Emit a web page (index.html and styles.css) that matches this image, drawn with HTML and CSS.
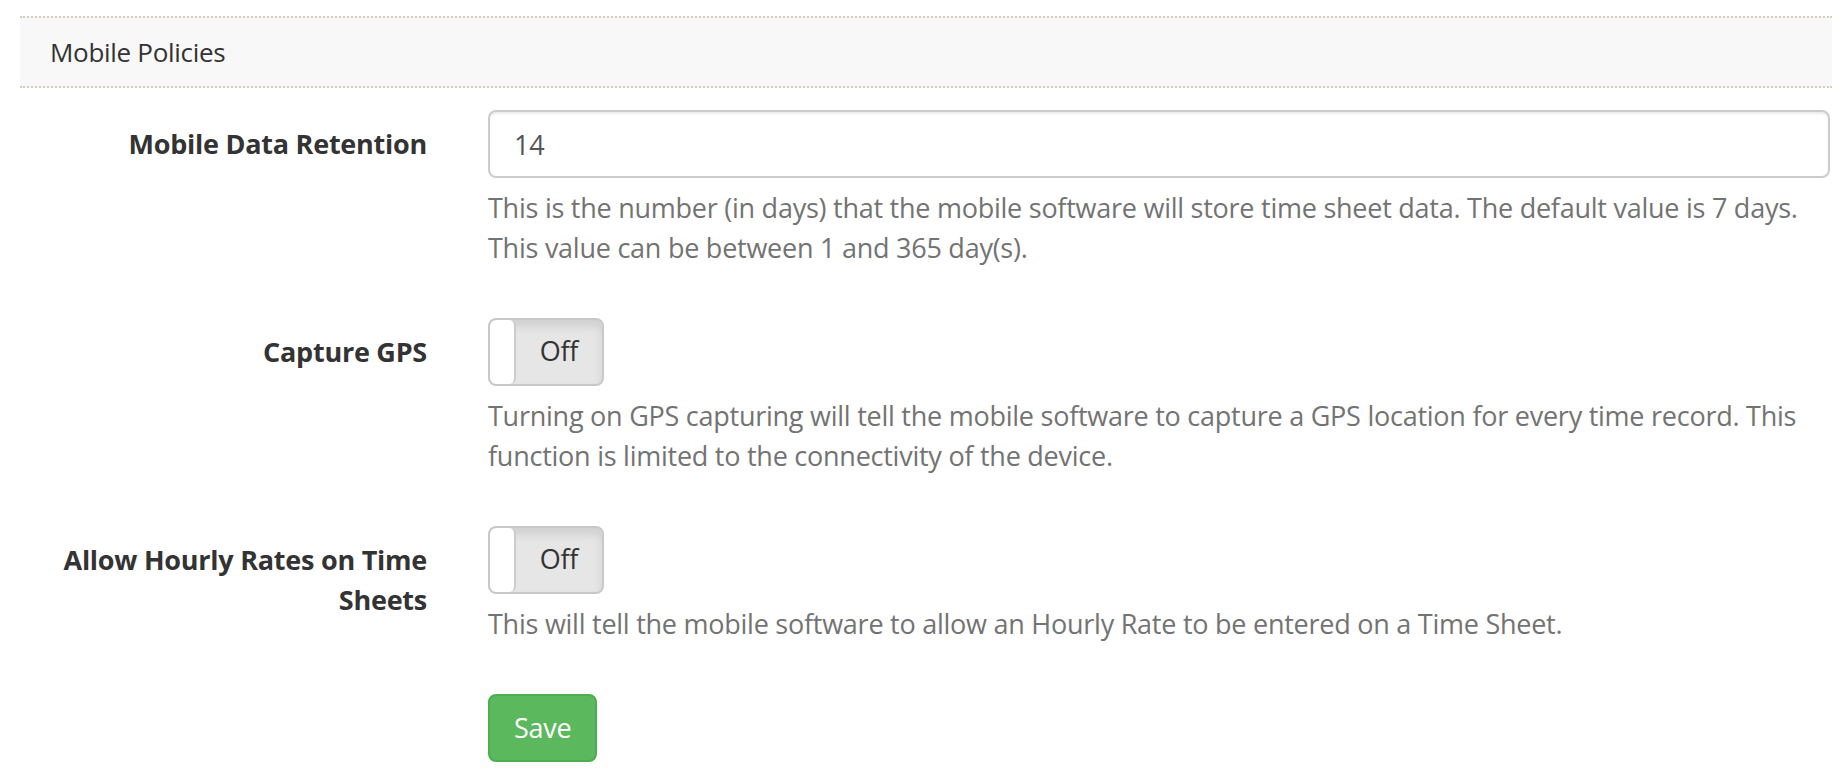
FILE: index.html
```html
<!DOCTYPE html>
<html lang="en">
<head>
<meta charset="utf-8">
<title>Mobile Policies</title>
<link rel="stylesheet" href="styles.css">
</head>
<body>
<div class="page">
  <div class="section-head">Mobile Policies</div>
  <form class="form">
    <div class="row">
      <label class="label">Mobile Data Retention</label>
      <div class="field">
        <input class="input" type="text" value="14">
        <p class="help">This is the number (in days) that the mobile software will store time sheet data. The default value is 7 days. This value can be between 1 and 365 day(s).</p>
      </div>
    </div>
    <div class="row">
      <label class="label">Capture GPS</label>
      <div class="field">
        <div class="toggle"><span class="knob"></span><span class="toggle-text">Off</span></div>
        <p class="help">Turning on GPS capturing will tell the mobile software to capture a GPS location for every time record. This function is limited to the connectivity of the device.</p>
      </div>
    </div>
    <div class="row">
      <label class="label">Allow Hourly Rates on Time Sheets</label>
      <div class="field">
        <div class="toggle"><span class="knob"></span><span class="toggle-text">Off</span></div>
        <p class="help">This will tell the mobile software to allow an Hourly Rate to be entered on a Time Sheet.</p>
      </div>
    </div>
    <div class="row">
      <div class="label"></div>
      <div class="field">
        <button class="save" type="button">Save</button>
      </div>
    </div>
  </form>
</div>
</body>
</html>
```

FILE: styles.css
```css
* { box-sizing: border-box; }
html, body { margin: 0; padding: 0; background: #fff; }
body {
  font-family: "Open Sans", "Noto Sans", sans-serif;
  font-size: 27px;
  letter-spacing: -0.25px;
  line-height: 40px;
  color: #333;
}
.page {
  padding: 16px 14px 0 20px;
}
.section-head {
  background: #f8f8f8;
  border-top: 2px dotted #d3cebd;
  border-bottom: 2px dotted #d3cebd;
  padding: 14px 30px;
  font-size: 26px;
  font-weight: 400;
  letter-spacing: -0.3px;
  line-height: 40px;
  color: #333;
}
.form {
  padding-top: 22px;
  margin-right: 2px;
}
.row {
  display: grid;
  grid-template-columns: 407px 1fr;
  column-gap: 61px;
  margin-bottom: 30px;
}
.label {
  text-align: right;
  font-weight: 700;
  padding-top: 14px;
  color: #333;
}
.field { min-width: 0; }
.input {
  display: block;
  width: 100%;
  height: 68px;
  padding: 12px 24px;
  font: inherit;
  letter-spacing: inherit;
  color: #555;
  background: #fff;
  border: 2px solid #ccc;
  border-radius: 8px;
  box-shadow: inset 0 2px 2px rgba(0,0,0,.075);
}
.help {
  margin: 10px 0 20px;
  color: #737373;
}
.toggle {
  display: flex;
  width: 116px;
  height: 68px;
  background: #e6e6e6;
  border: 2px solid #c8c8c8;
  border-radius: 8px;
  box-shadow: inset 0 6px 10px rgba(0,0,0,.10);
  overflow: hidden;
}
.knob {
  width: 26px;
  flex: none;
  background: #fff;
  border-right: 2px solid #ccc;
  border-radius: 6px;
}
.toggle-text {
  flex: 1;
  text-align: center;
  line-height: 62px;
  color: #333;
}
.save {
  font: inherit;
  letter-spacing: inherit;
  color: #fff;
  background: #5cb85c;
  border: 2px solid #4cae4c;
  border-radius: 8px;
  height: 68px;
  padding: 12px 24px;
  cursor: pointer;
}
```
